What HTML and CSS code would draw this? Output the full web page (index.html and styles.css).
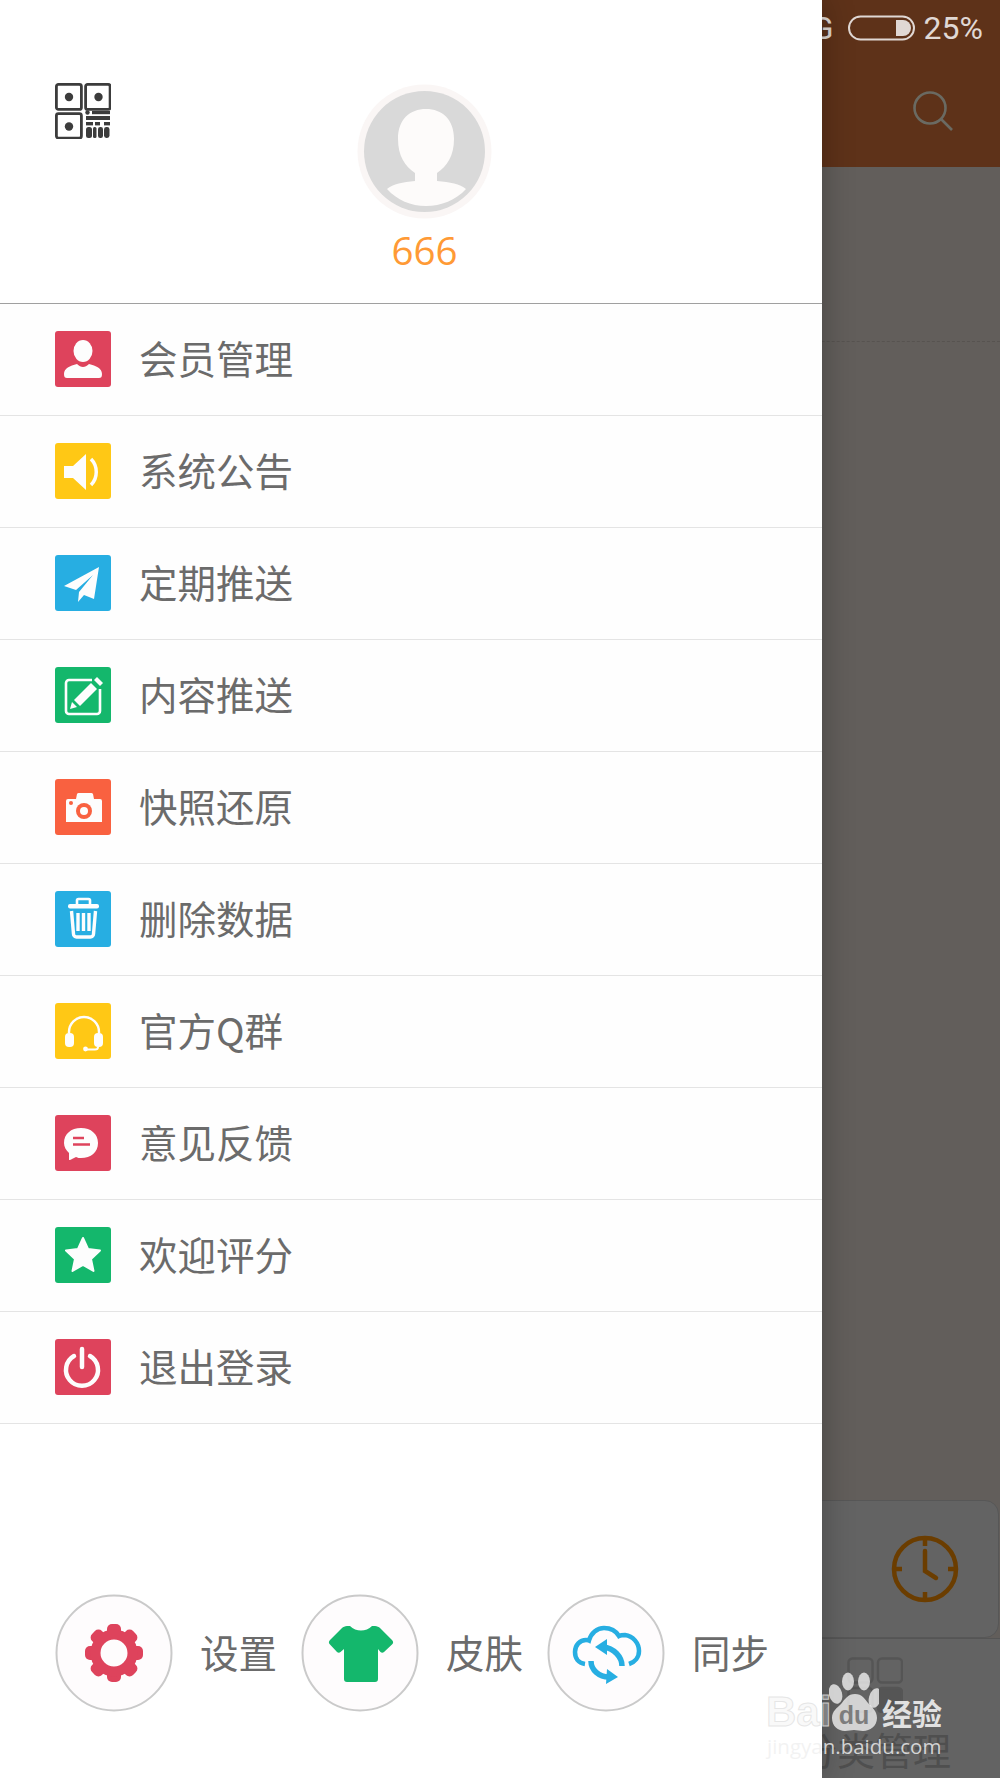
FILE: index.html
```html
<!DOCTYPE html>
<html lang="zh">
<head>
<meta charset="utf-8">
<title>菜单</title>
<link rel="stylesheet" href="styles.css">
</head>
<body>
<div class="app">
  <div class="app-top">
    <div class="status">
      <span class="net">4G</span>
      <svg class="battery" width="68" height="26" viewBox="0 0 68 26">
        <rect x="1" y="1.500" width="65" height="23" rx="11.500" fill="none" stroke="#e0d8d4" stroke-width="2"/>
        <path d="M48 5h7a8 8 0 0 1 0 16h-7z" fill="#e0d8d4"/>
      </svg>
      <span class="pct">25%</span>
    </div>
    <div class="toolbar">
      <svg class="search" width="42" height="42" viewBox="0 0 42 42">
        <circle cx="18" cy="18" r="15.500" fill="none" stroke="#6a6a62" stroke-width="2.600"/>
        <path d="M29 29l11 11" stroke="#6a6a62" stroke-width="2.600" fill="none"/>
      </svg>
    </div>
  </div>
  <div class="app-main">
    <div class="dash"></div>
    <div class="card">
      <svg class="clock" width="68" height="68" viewBox="0 0 68 68" fill="none" stroke="#6b3d00" stroke-width="4.500" stroke-linecap="round">
        <circle cx="34" cy="34" r="31"/>
        <path d="M34 3v8M34 57v8M3 34h8M57 34h8" stroke-linecap="butt"/>
        <path d="M34 16v20l11 7"/>
      </svg>
    </div>
    <div class="nav">
      <svg class="nav-grid" width="56" height="56" viewBox="0 0 56 56" fill="none" stroke="#555" stroke-width="2.400">
        <rect x="1.500" y="1.500" width="24" height="24" rx="4"/>
        <rect x="31" y="1.500" width="24" height="24" rx="4"/>
        <rect x="1.500" y="31" width="24" height="24" rx="4"/>
        <rect x="31" y="31" width="24" height="24" rx="4" fill="#555"/>
      </svg>
      <div class="nav-label">分类管理</div>
    </div>
  </div>

  <aside class="drawer">
    <header class="head">
      <svg class="qr" width="56" height="56" viewBox="0 0 56 56">
        <g fill="none" stroke="#3c3c3c" stroke-width="2.800">
          <rect x="1.400" y="1.400" width="25" height="25" rx="2"/>
          <rect x="30.600" y="1.400" width="24.500" height="25" rx="2"/>
          <rect x="1.400" y="30.600" width="25" height="24.500" rx="2"/>
        </g>
        <g fill="#3c3c3c">
          <circle cx="14" cy="14" r="4.200"/>
          <circle cx="43.500" cy="14" r="4.200"/>
          <circle cx="14" cy="43.500" r="4.200"/>
          <circle cx="32.500" cy="29.500" r="2.200"/>
          <rect x="37" y="28" width="18" height="3.200"/>
          <rect x="31" y="33" width="24" height="4"/>
          <rect x="31" y="39" width="7" height="3.400"/>
          <rect x="40" y="39" width="5" height="3.400"/>
          <rect x="49" y="39" width="6" height="3.400"/>
          <rect x="31" y="44" width="6" height="11" rx="2.500"/>
          <rect x="38" y="44" width="3.500" height="11" rx="1.500"/>
          <rect x="43" y="44" width="5" height="11" rx="2.200"/>
          <rect x="49" y="44" width="5.500" height="11" rx="2.400"/>
        </g>
      </svg>
      <div class="profile">
        <svg class="avatar" width="135" height="135" viewBox="0 0 135 135">
          <circle cx="67.500" cy="67.500" r="67" fill="#faf6f5"/>
          <circle cx="67.500" cy="67.500" r="60.500" fill="#d9d9d9"/>
          <path d="M69 25c-16 0-28 10-28 30 0 17 7 27 17 34v8c-12 1-22 3-28 8 10 11 24 17 39 17s30-6 40-17c-6-5-16-7-29-8v-8c10-7 17-17 17-34 0-20-12-30-28-30z" fill="#fdfbfa"/>
        </svg>
        <div class="name">666</div>
      </div>
    </header>

    <ul class="menu">
      <li class="row">
        <svg class="tile tile-red" viewBox="0 0 56 56"><ellipse cx="28" cy="20" rx="9.500" ry="11" fill="#fdfdfd"/><path d="M9 43c0-6 6-8 13-10 2 2 4 3 6 3s4-1 6-3c7 2 13 4 13 10 0 3-1 4-3 4H12c-2 0-3-1-3-4z" fill="#fdfdfd"/></svg>
        <span>会员管理</span>
      </li>
      <li class="row">
        <svg class="tile tile-yellow" viewBox="0 0 56 56"><path d="M9 23h9l13-12v36L18 35H9z" fill="#fdfdfd"/><path d="M36 16c7 7 7 19 0 26" fill="none" stroke="#fdfdfd" stroke-width="3.500"/></svg>
        <span>系统公告</span>
      </li>
      <li class="row">
        <svg class="tile tile-blue" viewBox="0 0 56 56"><path d="M44 12L9 31l12 4 17-15-14 17-1 10 6-7 10 4z" fill="#fdfdfd"/></svg>
        <span>定期推送</span>
      </li>
      <li class="row">
        <svg class="tile tile-green" viewBox="0 0 56 56"><path d="M37 13H14a3 3 0 0 0-3 3v28a3 3 0 0 0 3 3h28a3 3 0 0 0 3-3V22" fill="none" stroke="#fdfdfd" stroke-width="2.600"/><path d="M36 16l6 6-17 17-6-6z" fill="#fdfdfd"/><path d="M17 35l5 5-7 2z" fill="#fdfdfd"/><path d="M39 13l3-3 6 6-3 3z" fill="#fdfdfd"/></svg>
        <span>内容推送</span>
      </li>
      <li class="row">
        <svg class="tile tile-orange" viewBox="0 0 56 56"><path d="M11 22a2 2 0 0 1 2-2h8l1-5a2 2 0 0 1 2-1h12a2 2 0 0 1 2 1l1 5h6a2 2 0 0 1 2 2v21H11z" fill="#fdfdfd"/><circle cx="29" cy="32" r="8" fill="#f96140"/><circle cx="29" cy="32" r="4" fill="#fdfdfd"/><circle cx="16" cy="24" r="2" fill="#f96140"/></svg>
        <span>快照还原</span>
      </li>
      <li class="row">
        <svg class="tile tile-blue" viewBox="0 0 56 56"><path d="M22 13V9.500a1.500 1.500 0 0 1 1.500-1.500h10a1.500 1.500 0 0 1 1.500 1.500V13" fill="none" stroke="#fdfdfd" stroke-width="2.600"/><rect x="13" y="13" width="31" height="4.500" rx="2" fill="#fdfdfd"/><path d="M16.500 20l2 23a3 3 0 0 0 3 3h14a3 3 0 0 0 3-3l2-23" fill="none" stroke="#fdfdfd" stroke-width="3.400"/><path d="M23 22v18M28.500 22v18M34 22v18" stroke="#fdfdfd" stroke-width="3.400"/></svg>
        <span>删除数据</span>
      </li>
      <li class="row">
        <svg class="tile tile-yellow" viewBox="0 0 56 56"><path d="M14 30v-1a15 15 0 0 1 30 0v1" fill="none" stroke="#fdfdfd" stroke-width="2.400"/><rect x="10" y="30" width="9" height="14" rx="4" fill="#fdfdfd"/><rect x="39" y="30" width="9" height="14" rx="4" fill="#fdfdfd"/><path d="M43 44c0 2-1 2.500-3 2.500H30" fill="none" stroke="#fdfdfd" stroke-width="2"/><circle cx="30.500" cy="46" r="2.400" fill="#fdfdfd"/></svg>
        <span>官方Q群</span>
      </li>
      <li class="row">
        <svg class="tile tile-red" viewBox="0 0 56 56"><path d="M26 13c10 0 17 6 17 15s-7 15-17 15c-2 0-3 0-5-1l-6 3c-1 0-1 0-1-1v-6c-3-3-5-6-5-10 0-9 7-15 17-15z" fill="#fdfdfd"/><path d="M18 23h11M18 29.500h17" stroke="#de435c" stroke-width="2.600"/></svg>
        <span>意见反馈</span>
      </li>
      <li class="row">
        <svg class="tile tile-green" viewBox="0 0 56 56"><path d="M28 11l5 11 12 1.500-9 8.500 2.500 12L28 38l-10.500 6L20 32l-9-8.500L23 22z" fill="#fdfdfd" stroke="#fdfdfd" stroke-width="2" stroke-linejoin="round"/></svg>
        <span>欢迎评分</span>
      </li>
      <li class="row">
        <svg class="tile tile-red" viewBox="0 0 56 56"><path d="M19 17a16 16 0 1 0 16 0" fill="none" stroke="#fdfdfd" stroke-width="4.500" stroke-linecap="round"/><path d="M27 10v18" stroke="#fdfdfd" stroke-width="4.500" stroke-linecap="round"/></svg>
        <span>退出登录</span>
      </li>
    </ul>

    <footer class="foot">
      <div class="tool">
        <svg class="circle" width="118" height="118" viewBox="0 0 118 118">
          <circle cx="59" cy="59" r="57.500" fill="#fefcfd" stroke="#cacaca" stroke-width="2"/>
          <g fill="#de435c">
            <rect x="52" y="30" width="14" height="14" rx="5"/>
            <rect x="52" y="30" width="14" height="14" rx="5" transform="rotate(45 59 59)"/>
            <rect x="52" y="30" width="14" height="14" rx="5" transform="rotate(90 59 59)"/>
            <rect x="52" y="30" width="14" height="14" rx="5" transform="rotate(135 59 59)"/>
            <rect x="52" y="30" width="14" height="14" rx="5" transform="rotate(180 59 59)"/>
            <rect x="52" y="30" width="14" height="14" rx="5" transform="rotate(225 59 59)"/>
            <rect x="52" y="30" width="14" height="14" rx="5" transform="rotate(270 59 59)"/>
            <rect x="52" y="30" width="14" height="14" rx="5" transform="rotate(315 59 59)"/>
          </g>
          <circle cx="59" cy="59" r="18.500" fill="none" stroke="#de435c" stroke-width="10"/>
        </svg>
        <span>设置</span>
      </div>
      <div class="tool">
        <svg class="circle" width="118" height="118" viewBox="0 0 118 118">
          <circle cx="59" cy="59" r="57.500" fill="#fefcfd" stroke="#cacaca" stroke-width="2"/>
          <path transform="translate(1 0)" d="M45 32h3c3 3 7 4.500 11 4.500S67 35 70 32h3c2 0 4 1 5 2l12 12c1.500 1.500 1.500 3 0 4.500l-8 7.500c-1 1-2.500 1-3.500 0L76 55v30a3 3 0 0 1-3 3H45a3 3 0 0 1-3-3V55l-3.500 3c-1 1-2.500 1-3.500 0l-7-7.500c-1.500-1.500-1.500-3 0-4.500l12-12c1-1 3-2 5-2z" fill="#14b76c"/>
        </svg>
        <span>皮肤</span>
      </div>
      <div class="tool">
        <svg class="circle" width="118" height="118" viewBox="0 0 118 118">
          <circle cx="59" cy="59" r="57.500" fill="#fefcfd" stroke="#cacaca" stroke-width="2"/>
          <g fill="none" stroke="#27aee2" stroke-width="4.500">
            <path d="M38 70c-7-1-10-6-10-12 0-7 5-12 11-12 1 0 2 0 3 .5C44 39 50 34 57 34c6 0 12 3 15 8 2-1 4-1 6-1 8 1 14 8 14 16 0 6-4 11-10 13"/>
          </g>
          <g fill="none" stroke="#27aee2" stroke-width="5.500">
            <path d="M75 72c0-9-8-18-19-19"/>
            <path d="M44 67c0 9 8 16 18 16"/>
          </g>
          <path d="M60 45l-12 8 12 8zM60 75l11 8-12 7z" fill="#27aee2"/>
        </svg>
        <span>同步</span>
      </div>
    </footer>
  </aside>

  <div class="mark">
    <span class="mark-bai">Bai</span>
    <svg class="mark-paw" width="50" height="60" viewBox="0 0 50 60">
      <g fill="#fff" fill-opacity=".72">
        <ellipse cx="6.500" cy="22" rx="6.500" ry="10" transform="rotate(-15 6.500 22)"/>
        <ellipse cx="19" cy="9.500" rx="6" ry="9"/>
        <ellipse cx="35" cy="9.500" rx="6" ry="9"/>
        <ellipse cx="46" cy="26" rx="6" ry="10" transform="rotate(15 46 26)"/>
        <path d="M26 22c7 0 10 5 13 9 4 4 9 8 9 15 0 8-7 13-14 13-3 0-6-1-9-1s-6 1-9 1C9 59 3 54 3 46c0-7 5-10 9-14 4-5 7-10 14-10z"/>
      </g>
      <text x="25" y="52" class="mark-du">du</text>
    </svg>
    <span class="mark-jy">经验</span>
    <span class="mark-url">jingyan.baidu.com</span>
  </div>
</div>
</body>
</html>
```
FILE: styles.css
```css
* { box-sizing: border-box; }
html, body { margin: 0; padding: 0; }
body { font-family: "Noto Sans CJK SC", "Noto Sans", sans-serif; background: #625e5b; }

.app {
  position: relative;
  width: 1000px;
  height: 1778px;
  overflow: hidden;
  display: flex;
  flex-direction: column;
  background: #625e5b;
}

/* page under the drawer */
.app-top {
  height: 167px;
  background: #5e3219;
  display: flex;
  flex-direction: column;
}
.status {
  height: 56px;
  display: flex;
  align-items: center;
  justify-content: flex-end;
  padding-right: 17px;
  color: #e0d8d4;
  font-family: Roboto, sans-serif;
  font-size: 32px;
}
.net { margin-right: 14px; }
.battery { margin-right: 8px; }
.toolbar {
  display: flex;
  justify-content: flex-end;
  padding: 34px 46px 0 0;
}
.app-main {
  flex: 1;
  display: flex;
  flex-direction: column;
  background: linear-gradient(#625e5b, #625e5b 1480px, #636363);
}
.dash {
  margin-top: 174px;
  border-top: 1px dashed #575350;
}
.card {
  margin-top: auto;
  margin-left: 500px;
  margin-right: 1px;
  height: 138px;
  border: 1px solid #575757;
  border-radius: 14px;
  background: #636363;
  display: flex;
  align-items: center;
  justify-content: flex-end;
  padding-right: 39px;
}
.nav {
  height: 140px;
  border-top: 1px solid #555;
  padding-left: 750px;
  padding-top: 18px;
  display: flex;
  flex-direction: column;
  align-items: center;
  background: #636363;
}
.nav-label {
  font-size: 38px;
  line-height: 50px;
  margin-top: 11px;
  color: #4f4f4f;
  white-space: nowrap;
}

/* drawer */
.drawer {
  position: absolute;
  left: 0;
  top: 0;
  width: 822px;
  height: 1778px;
  background: #fff;
  display: flex;
  flex-direction: column;
  box-shadow: 0 0 30px rgba(0, 0, 0, .28);
}
.head {
  height: 304px;
  flex: none;
  border-bottom: 1px solid #a0a0a0;
  padding-left: 55px;
  display: flex;
  align-items: flex-start;
}
.qr { margin-top: 83px; }
.profile {
  margin-left: 246px;
  margin-top: 84px;
  width: 135px;
  display: flex;
  flex-direction: column;
  align-items: center;
}
.avatar { display: block; }
.name {
  font-family: "Open Sans", sans-serif;
  font-size: 38.500px;
  line-height: 52px;
  margin-top: 5px;
  color: #ff9a35;
}

.menu {
  list-style: none;
  margin: 0;
  padding: 0;
  background: #fefefe;
}
.row {
  height: 112px;
  border-bottom: 1px solid #e4e4e4;
  padding: 0 0 1px 55px;
  display: flex;
  align-items: center;
  gap: 28px;
  font-size: 38.500px;
  color: #6b6b6b;
}
.row span { margin-bottom: 4px; }
.tile {
  width: 56px;
  height: 56px;
  border-radius: 3px;
  flex: none;
}
.tile-red { background: #de435c; }
.tile-yellow { background: #ffc815; }
.tile-blue { background: #27aee2; }
.tile-green { background: #14b76c; }
.tile-orange { background: #f96140; }

.foot {
  margin-top: auto;
  padding: 0 0 66px 55px;
  display: flex;
}
.tool {
  width: 246px;
  display: flex;
  align-items: center;
  gap: 27px;
  font-size: 38.500px;
  color: #6b6b6b;
}
.tool span { margin-bottom: 4px; }
.circle { flex: none; display: block; }

/* watermark */
.mark {
  position: absolute;
  left: 0;
  top: 0;
  width: 1000px;
  height: 1778px;
  pointer-events: none;
}
.mark-bai {
  position: absolute;
  left: 766px;
  top: 1688px;
  font-family: "Liberation Sans", sans-serif;
  font-weight: 700;
  font-size: 42px;
  line-height: 48px;
  color: rgba(235, 235, 235, .3);
  -webkit-text-stroke: 1px rgba(225, 225, 225, .8);
}
.mark-paw {
  position: absolute;
  left: 829px;
  top: 1672px;
}
.mark-du {
  font-family: "Liberation Sans", sans-serif;
  font-weight: 700;
  font-size: 25px;
  text-anchor: middle;
  fill: #7d7d7d;
}
.mark-jy {
  position: absolute;
  left: 882px;
  top: 1690px;
  font-weight: 700;
  font-size: 30px;
  line-height: 44px;
  color: rgba(255, 255, 255, .82);
}
.mark-url {
  position: absolute;
  left: 767px;
  top: 1731px;
  font-family: "Open Sans", sans-serif;
  font-size: 20.500px;
  line-height: 30px;
  color: rgba(240, 240, 240, .82);
}
```
